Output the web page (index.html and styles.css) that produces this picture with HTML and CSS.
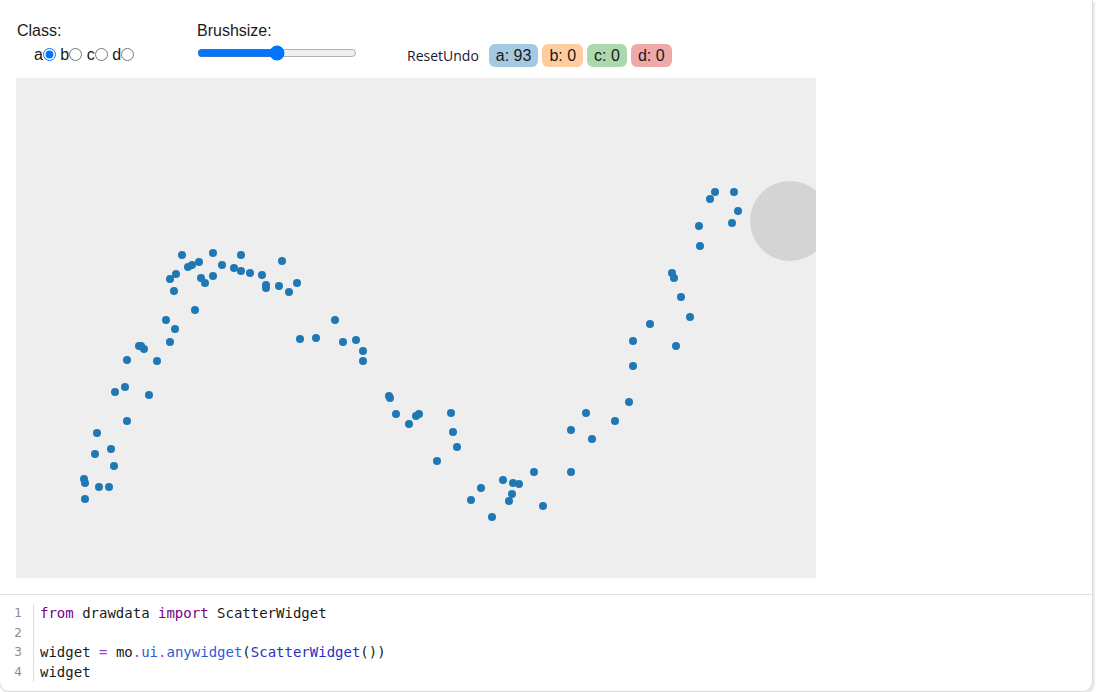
FILE: index.html
```html
<!DOCTYPE html>
<html>
<head>
<meta charset="utf-8">
<link rel="stylesheet" href="styles.css">
</head>
<body>
<div class="cell">
  <div class="output">
    <div class="controls">
      <div class="group group-class">
        <div class="label">Class:</div>
        <div class="radios">
          <label>a<input type="radio" name="cls" checked></label>
          <label>b<input type="radio" name="cls"></label>
          <label>c<input type="radio" name="cls"></label>
          <label>d<input type="radio" name="cls"></label>
        </div>
      </div>
      <div class="group group-brush">
        <div class="label">Brushsize:</div>
        <input class="slider" type="range" min="0" max="100" value="50">
      </div>
      <div class="group group-actions">
        <span class="buttons"><button class="btn">Reset</button><button class="btn">Undo</button></span>
        <span class="badge badge-a">a: 93</span>
        <span class="badge badge-b">b: 0</span>
        <span class="badge badge-c">c: 0</span>
        <span class="badge badge-d">d: 0</span>
      </div>
    </div>
    <div class="canvas">
      <svg width="800" height="500" viewBox="0 0 800 500">
        <g transform="translate(-16,-78)" fill="#1f77b4">
          <circle cx="84" cy="479" r="4"/><circle cx="85" cy="483" r="4"/><circle cx="85" cy="499" r="4"/>
          <circle cx="97" cy="433" r="4"/><circle cx="95" cy="454" r="4"/><circle cx="99" cy="487" r="4"/>
          <circle cx="109" cy="487" r="4"/><circle cx="111" cy="449" r="4"/><circle cx="114" cy="466" r="4"/>
          <circle cx="115" cy="392" r="4"/><circle cx="125" cy="387" r="4"/><circle cx="127" cy="360" r="4"/>
          <circle cx="127" cy="421" r="4"/><circle cx="139" cy="346" r="4"/><circle cx="141" cy="346" r="4"/>
          <circle cx="144" cy="349" r="4"/><circle cx="149" cy="395" r="4"/><circle cx="157" cy="361" r="4"/>
          <circle cx="166" cy="320" r="4"/><circle cx="170" cy="342" r="4"/><circle cx="175" cy="329" r="4"/>
          <circle cx="174" cy="291" r="4"/><circle cx="170" cy="279" r="4"/><circle cx="176" cy="274" r="4"/>
          <circle cx="182" cy="255" r="4"/><circle cx="188" cy="267" r="4"/><circle cx="192" cy="265" r="4"/>
          <circle cx="195" cy="310" r="4"/><circle cx="199" cy="262" r="4"/><circle cx="201" cy="278" r="4"/>
          <circle cx="205" cy="283" r="4"/><circle cx="213" cy="253" r="4"/><circle cx="213" cy="276" r="4"/>
          <circle cx="222" cy="265" r="4"/><circle cx="234" cy="268" r="4"/><circle cx="241" cy="255" r="4"/>
          <circle cx="241" cy="271" r="4"/><circle cx="250" cy="273" r="4"/><circle cx="262" cy="275" r="4"/>
          <circle cx="266" cy="285" r="4"/><circle cx="266" cy="288" r="4"/><circle cx="279" cy="286" r="4"/>
          <circle cx="282" cy="261" r="4"/><circle cx="289" cy="292" r="4"/><circle cx="297" cy="283" r="4"/>
          <circle cx="300" cy="339" r="4"/><circle cx="316" cy="338" r="4"/><circle cx="335" cy="320" r="4"/>
          <circle cx="343" cy="342" r="4"/><circle cx="356" cy="340" r="4"/><circle cx="363" cy="351" r="4"/>
          <circle cx="363" cy="361" r="4"/>
          <circle cx="389" cy="396" r="4"/><circle cx="390" cy="398" r="4"/><circle cx="396" cy="414" r="4"/>
          <circle cx="409" cy="424" r="4"/><circle cx="416" cy="416" r="4"/><circle cx="419" cy="414" r="4"/>
          <circle cx="451" cy="413" r="4"/><circle cx="453" cy="432" r="4"/><circle cx="457" cy="447" r="4"/>
          <circle cx="437" cy="461" r="4"/><circle cx="471" cy="500" r="4"/><circle cx="481" cy="488" r="4"/>
          <circle cx="492" cy="517" r="4"/><circle cx="503" cy="480" r="4"/><circle cx="509" cy="501" r="4"/>
          <circle cx="512" cy="494" r="4"/><circle cx="513" cy="483" r="4"/><circle cx="519" cy="484" r="4"/>
          <circle cx="534" cy="472" r="4"/><circle cx="543" cy="506" r="4"/><circle cx="571" cy="472" r="4"/>
          <circle cx="571" cy="430" r="4"/><circle cx="586" cy="413" r="4"/><circle cx="592" cy="439" r="4"/>
          <circle cx="615" cy="421" r="4"/><circle cx="629" cy="402" r="4"/><circle cx="633" cy="366" r="4"/>
          <circle cx="633" cy="341" r="4"/><circle cx="650" cy="324" r="4"/><circle cx="672" cy="273" r="4"/>
          <circle cx="674" cy="278" r="4"/><circle cx="676" cy="346" r="4"/><circle cx="681" cy="297" r="4"/>
          <circle cx="690" cy="317" r="4"/><circle cx="699" cy="226" r="4"/><circle cx="700" cy="246" r="4"/>
          <circle cx="710" cy="199" r="4"/><circle cx="715" cy="192" r="4"/><circle cx="732" cy="223" r="4"/>
          <circle cx="734" cy="192" r="4"/><circle cx="738" cy="211" r="4"/>
          <circle cx="790" cy="221" r="40" fill="#d4d4d4"/>
        </g>
      </svg>
    </div>
  </div>
  <div class="editor">
    <div class="gutter">
      <div>1</div><div>2</div><div>3</div><div>4</div>
    </div>
    <div class="code">
      <div><span class="kw">from</span> drawdata <span class="kw">import</span> ScatterWidget</div>
      <div>&nbsp;</div>
      <div>widget <span class="op">=</span> mo<span class="op">.</span><span class="prop">ui</span><span class="op">.</span><span class="prop">anywidget</span>(<span class="fn">ScatterWidget</span>())</div>
      <div>widget</div>
    </div>
  </div>
</div>
</body>
</html>
```

FILE: styles.css
```css
html, body {
  margin: 0;
  padding: 0;
  background: #ffffff;
  overflow: hidden;
}

.cell {
  width: 1092px;
  margin-left: -1px;
  border: 1px solid #dcdcdc;
  border-top: none;
  border-radius: 0 0 10px 10px;
  box-shadow: 2px 2px 0 #ececec;
  background: #ffffff;
}

.output {
  padding: 22px 16px 16px 17px;
  font-family: "Liberation Sans", Arial, sans-serif;
  font-size: 16px;
  color: #1a1a1a;
}

.controls {
  display: flex;
  align-items: flex-start;
  height: 45px;
  margin-bottom: 11px;
}

.label {
  line-height: 18px;
  height: 18px;
}

.group-class {
  width: 180px;
}

.radios {
  padding-left: 17px;
  margin-top: 5px;
  line-height: 20px;
  white-space: nowrap;
}

.radios input {
  width: 13px;
  height: 13px;
  margin: 0;
  vertical-align: -1px;
}

.group-brush {
  width: 210px;
}

.slider {
  display: block;
  width: 160px;
  margin: 5px 0 0 0;
}

.group-actions {
  display: flex;
  align-items: center;
  gap: 4px;
  margin-top: 22px;
}

.buttons {
  display: flex;
  margin-right: 6px;
}

.btn {
  background: none;
  border: none;
  padding: 0;
  margin: 0;
  font-family: "Open Sans", sans-serif;
  font-size: 14px;
  color: #1a1a2e;
}

.badge {
  display: inline-block;
  height: 23px;
  line-height: 23px;
  padding: 0 7px;
  border-radius: 6px;
  color: #1a1a1a;
}

.badge-a { background: #a5c9e1; }
.badge-b { background: #ffcc9f; }
.badge-c { background: #abd9ab; }
.badge-d { background: #eea9a9; }

.canvas {
  width: 800px;
  height: 500px;
  margin-left: -1px;
  background: #eeeeee;
}

.canvas svg {
  display: block;
}

.editor {
  display: flex;
  border-top: 1px solid #e2e2e2;
  padding: 9px 0 9px 0;
}

.gutter {
  width: 22px;
  padding-right: 11px;
  border-right: 1px solid #dddddd;
  text-align: right;
  font-family: "DejaVu Sans", sans-serif;
  font-size: 12px;
  line-height: 19.5px;
  color: #8a8a8a;
}

.code {
  padding-left: 6px;
  font-family: "DejaVu Sans Mono", monospace;
  font-size: 14px;
  line-height: 19.5px;
  color: #1a1a1a;
}

.kw { color: #770088; }
.op { color: #a23bd6; }
.prop { color: #2f5bd4; }
.fn { color: #2a2fc2; }
```
